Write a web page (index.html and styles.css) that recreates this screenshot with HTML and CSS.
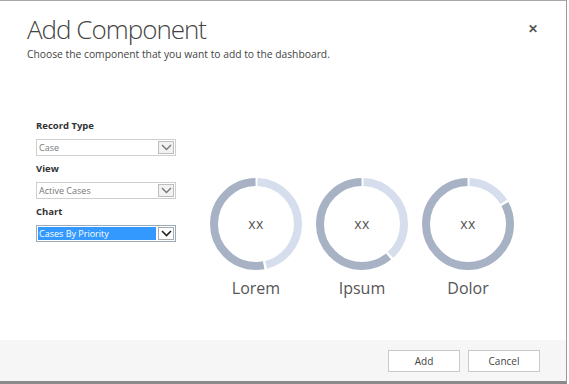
FILE: index.html
```html
<!DOCTYPE html>
<html>
<head>
<meta charset="utf-8">
<link rel="stylesheet" href="styles.css">
</head>
<body>
<div class="dialog">
  <div class="header">
    <div class="title-row">
      <h1 class="title">Add Component</h1>
      <span class="close">&#x2715;</span>
    </div>
    <p class="subtitle">Choose the component that you want to add to the dashboard.</p>
  </div>
  <div class="content">
    <div class="form">
      <div class="label">Record Type</div>
      <div class="select"><span class="value">Case</span><span class="arrow"><svg width="11" height="7" viewBox="0 0 11 7"><path d="M1 1 L5.5 5.5 L10 1" fill="none" stroke="#777" stroke-width="1.4"/></svg></span></div>
      <div class="label">View</div>
      <div class="select"><span class="value">Active Cases</span><span class="arrow"><svg width="11" height="7" viewBox="0 0 11 7"><path d="M1 1 L5.5 5.5 L10 1" fill="none" stroke="#777" stroke-width="1.4"/></svg></span></div>
      <div class="label">Chart</div>
      <div class="select active"><span class="value">Cases By Priority</span><span class="arrow"><svg width="11" height="7" viewBox="0 0 11 7"><path d="M1 1 L5.5 5.5 L10 1" fill="none" stroke="#222" stroke-width="1.6"/></svg></span></div>
    </div>
    <div class="charts">
      <div class="chart">
        <div class="donut">
          <svg width="94" height="94" viewBox="0 0 94 94">
            <g transform="rotate(-90 47 47)">
              <circle cx="47" cy="47" r="42" fill="none" stroke="#d6deed" stroke-width="8" stroke-dasharray="120 300" stroke-dashoffset="-1.5"/>
              <circle cx="47" cy="47" r="42" fill="none" stroke="#a8b2c5" stroke-width="8" stroke-dasharray="139 300" stroke-dashoffset="-124"/>
            </g>
          </svg>
          <span class="xx">xx</span>
        </div>
        <div class="name">Lorem</div>
      </div>
      <div class="chart">
        <div class="donut">
          <svg width="94" height="94" viewBox="0 0 94 94">
            <g transform="rotate(-90 47 47)">
              <circle cx="47" cy="47" r="42" fill="none" stroke="#d6deed" stroke-width="8" stroke-dasharray="99 300" stroke-dashoffset="-1.5"/>
              <circle cx="47" cy="47" r="42" fill="none" stroke="#a8b2c5" stroke-width="8" stroke-dasharray="160 300" stroke-dashoffset="-103"/>
            </g>
          </svg>
          <span class="xx">xx</span>
        </div>
        <div class="name">Ipsum</div>
      </div>
      <div class="chart">
        <div class="donut">
          <svg width="94" height="94" viewBox="0 0 94 94">
            <g transform="rotate(-90 47 47)">
              <circle cx="47" cy="47" r="42" fill="none" stroke="#d6deed" stroke-width="8" stroke-dasharray="41 300" stroke-dashoffset="-1.5"/>
              <circle cx="47" cy="47" r="42" fill="none" stroke="#a8b2c5" stroke-width="8" stroke-dasharray="218 300" stroke-dashoffset="-45"/>
            </g>
          </svg>
          <span class="xx">xx</span>
        </div>
        <div class="name">Dolor</div>
      </div>
    </div>
  </div>
  <div class="footer">
    <button class="btn">Add</button>
    <button class="btn">Cancel</button>
  </div>
</div>
</body>
</html>
```
FILE: styles.css
```css
html, body {
  margin: 0;
  padding: 0;
  background: #ffffff;
}
body {
  font-family: "Open Sans", "Liberation Sans", sans-serif;
  color: #444;
}
.dialog {
  width: 566px;
  height: 380px;
  border-top: 1px solid #a8a8a8;
  border-right: 1px solid #9a9a9a;
  border-bottom: 3px solid #8a8a8a;
  display: flex;
  flex-direction: column;
  background: #fff;
}
.header {
  padding: 10px 27px 0 27px;
}
.title-row {
  display: flex;
  justify-content: space-between;
  align-items: flex-start;
}
.title {
  margin: 0;
  font-family: "Open Sans", sans-serif;
  font-weight: 300;
  font-size: 26px;
  line-height: 36px;
  letter-spacing: -1px;
  color: #444;
}
.close {
  font-size: 12px;
  color: #555;
  margin-top: 9px;
  margin-right: 1px;
  font-weight: 700;
}
.subtitle {
  margin: 0;
  font-size: 10.3px;
  line-height: 14px;
  color: #444;
}
.content {
  flex: 1;
  display: flex;
  padding: 59px 0 0 36px;
}
.form {
  width: 140px;
}
.label {
  font-size: 9.5px;
  font-weight: 700;
  color: #333;
  line-height: 12px;
  margin-bottom: 7px;
}
.select {
  display: flex;
  height: 17px;
  border: 1px solid #cfcfcf;
  box-sizing: border-box;
  margin-bottom: 7px;
  background: #fff;
}
.select .value {
  flex: 1;
  font-size: 9px;
  line-height: 15px;
  color: #777;
  padding-left: 2px;
}
.select .arrow {
  width: 16px;
  height: 13px;
  margin: 1px 1px 1px 0;
  border: 1px solid #bdbdbd;
  box-sizing: border-box;
  background: #f2f2f2;
  display: flex;
  align-items: center;
  justify-content: center;
}
.select.active {
  border-color: #9ab;
}
.select.active .value {
  background: #3399ff;
  color: #fff;
  margin: 1px 2px 1px 1px;
  line-height: 13px;
  padding-left: 1px;
}
.select.active .arrow {
  background: #fff;
  border-color: #aaa;
}
.charts {
  display: flex;
  gap: 12px;
  margin-left: 33px;
  padding-top: 57px;
}
.chart {
  display: flex;
  flex-direction: column;
  align-items: center;
  width: 94px;
}
.donut {
  position: relative;
  width: 94px;
  height: 94px;
}
.donut svg {
  display: block;
}
.xx {
  position: absolute;
  left: 0;
  right: 0;
  top: 37px;
  text-align: center;
  font-size: 14px;
  color: #555;
  letter-spacing: 0.5px;
}
.name {
  margin-top: 6px;
  font-size: 16px;
  color: #555;
}
.footer {
  height: 41px;
  background: #f6f6f6;
  display: flex;
  justify-content: flex-end;
  align-items: center;
  gap: 8px;
  padding-right: 26px;
}
.btn {
  width: 72px;
  height: 22px;
  border: 1px solid #c8c8c8;
  background: #fff;
  font-family: "Open Sans", "Liberation Sans", sans-serif;
  font-size: 10px;
  color: #444;
  padding: 0;
}
```
